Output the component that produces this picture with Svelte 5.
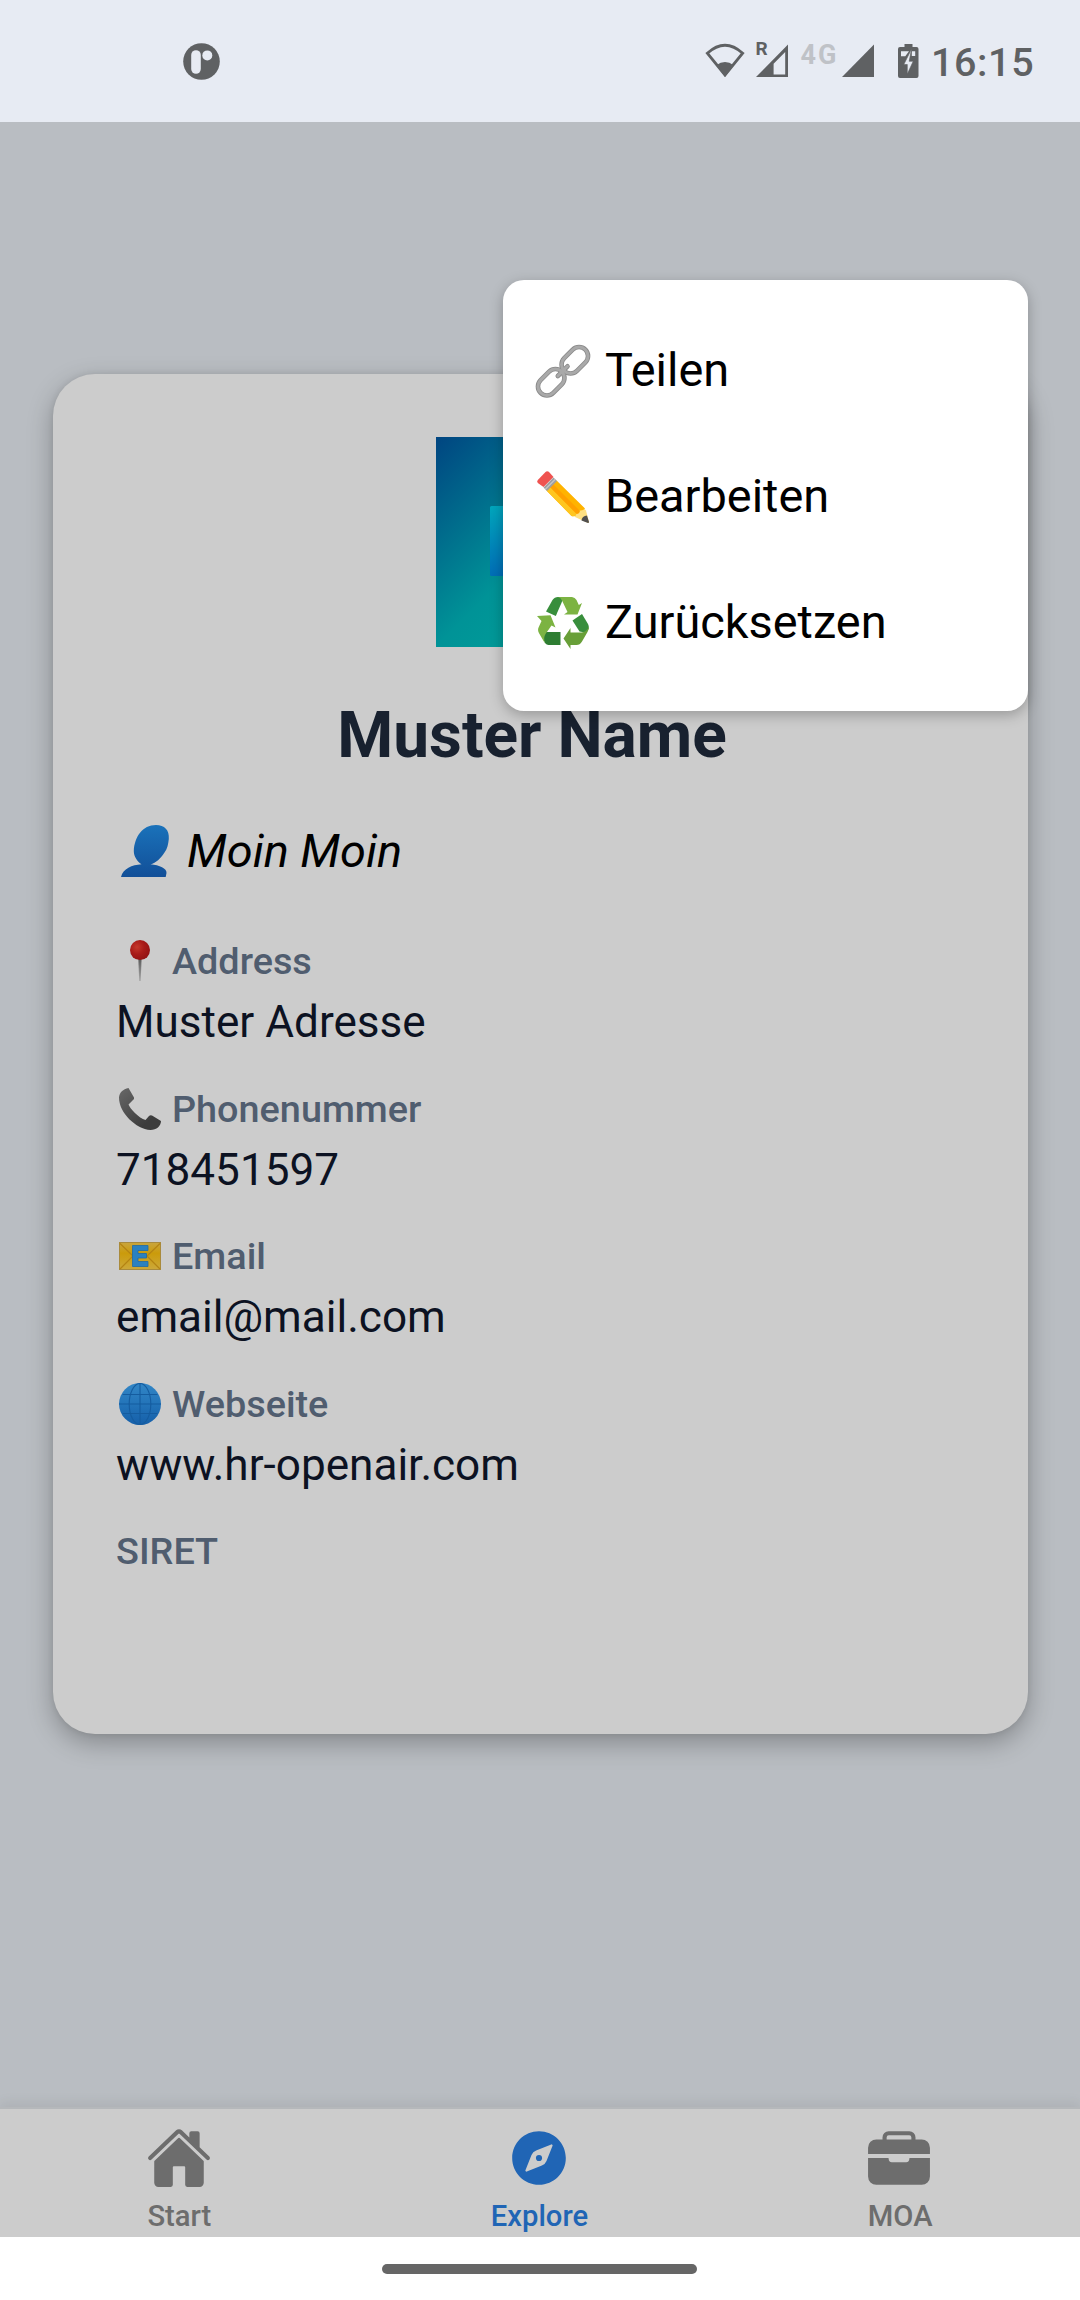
<script>
  const fields = [
    { icon: 'pin', label: 'Address', value: 'Muster Adresse' },
    { icon: 'phone', label: 'Phonenummer', value: '718451597' },
    { icon: 'mail', label: 'Email', value: 'email@mail.com' },
    { icon: 'globe', label: 'Webseite', value: 'www.hr-openair.com' },
    { icon: '', label: 'SIRET', value: '' },
  ];
  const actions = [
    { icon: 'link', label: 'Teilen' },
    { icon: 'pencil', label: 'Bearbeiten' },
    { icon: 'recycle', label: 'Zurücksetzen' },
  ];
  const tabs = [
    { icon: 'home', label: 'Start' },
    { icon: 'compass', label: 'Explore', active: true },
    { icon: 'briefcase', label: 'MOA' },
  ];
</script>

<div class="screen">
  <header class="status">
    <svg class="app-badge" viewBox="0 0 37 37">
      <circle cx="18.5" cy="18.5" r="18.3" fill="#5f6163" />
      <rect x="8.2" y="7.2" width="9.6" height="23.6" rx="4.8" fill="#e7ebf3" />
      <circle cx="24.3" cy="12.4" r="5" fill="#e7ebf3" />
    </svg>
    <svg class="indicators" viewBox="0 -20 220 64">
      <g fill="#5f6163">
        <path d="M4.300 13.2Q22 -2.800 39.700 13.2L22 35Z" fill="none" stroke="#5f6163" stroke-width="2.800" />
        <path d="M13.300 25.200Q22 19 30.700 25.200L22 36.800Z" />
        <path fill-rule="evenodd" d="M53 37L85 4.500V37ZM70.600 34.500H82.200V12L70.600 23.700Z" />
        <path d="M139 37L171 4.500V37Z" />
        <path d="M201.500 4h8v3h4a2 2 0 0 1 2 2V36a2 2 0 0 1-2 2H197a2 2 0 0 1-2-2V9a2 2 0 0 1 2-2h4.500Z" />
      </g>
      <path d="M198 11.300h8l-3.700 5H198ZM208.800 11.300h3.400v4.700h-3.400Z" fill="#e7ebf3" />
      <path d="M208.500 9L200.800 24.500h3.500V34L210.200 21.300h-4Z" fill="#e7ebf3" stroke="#5f6163" stroke-width=".6" />
      <text class="roam" x="52.500" y="15.300">R</text>
      <text class="net" x="97.500" y="23.500" textLength="36">4G</text>
    </svg>
    <span class="clock">16:15</span>
  </header>

  <main class="page">
    <section class="card">
      <svg class="logo" viewBox="0 0 210 210">
        <defs>
          <linearGradient id="logo-bg" x1="0" y1="0" x2="1" y2="1">
            <stop offset="0" stop-color="#004581" />
            <stop offset=".5" stop-color="#009397" />
            <stop offset="1" stop-color="#00a99b" />
          </linearGradient>
          <linearGradient id="logo-fg" x1="0" y1="0" x2=".3" y2="1">
            <stop offset="0" stop-color="#00a7bd" />
            <stop offset="1" stop-color="#0069b6" />
          </linearGradient>
        </defs>
        <rect width="210" height="210" fill="url(#logo-bg)" />
        <rect x="54" y="69" width="102" height="70" rx="1.500" fill="url(#logo-fg)" />
      </svg>
      <h1>Muster Name</h1>
      <p class="greeting">
        <svg class="person" viewBox="0 0 52 54">
          <defs>
            <linearGradient id="person-fill" x1="0" y1="0" x2="0" y2="1">
              <stop offset="0" stop-color="#1a72ba" />
              <stop offset="1" stop-color="#124f98" />
            </linearGradient>
          </defs>
          <path d="M1 53C3 44.500 12 41 21.500 40.300C17.500 37.500 13.800 33 13.800 27C14.500 13 22.500 1 36 1C44.500 1 49.500 6 48.800 15C48.200 20 47.500 24.500 44.500 28.500C40.500 34.500 36 39 30.500 40.300C39.500 41 47 44.500 46.500 49L45.700 53Z" fill="url(#person-fill)" />
        </svg>
        <em>Moin Moin</em>
      </p>

      <div class="fields">
        {#each fields as f}
          <div class="field">
            <div class="label">
              {#if f.icon === 'pin'}
                <svg class="glyph" viewBox="0 0 42 42">
                  <defs>
                    <radialGradient id="pin-head" cx=".35" cy=".35" r=".65">
                      <stop offset="0" stop-color="#c5382b" />
                      <stop offset=".55" stop-color="#a81b18" />
                      <stop offset="1" stop-color="#951313" />
                    </radialGradient>
                    <linearGradient id="pin-needle" x1="0" y1="0" x2="0" y2="1">
                      <stop offset="0" stop-color="#585858" />
                      <stop offset="1" stop-color="#aaa" />
                    </linearGradient>
                  </defs>
                  <path d="M19.300 18h3.300l-.9 23h-1.500Z" fill="url(#pin-needle)" />
                  <circle cx="21" cy="10.100" r="10" fill="url(#pin-head)" />
                </svg>
              {:else if f.icon === 'phone'}
                <svg class="glyph" viewBox="0 0 42 42">
                  <defs>
                    <linearGradient id="phone-fill" x1="0" y1="0" x2=".7" y2=".8">
                      <stop offset="0" stop-color="#686868" />
                      <stop offset="1" stop-color="#3c3c3c" />
                    </linearGradient>
                  </defs>
                  <path d="M0 9.500C.5 4.500 4 1 9.500 0L15 9.500Q15.500 11 14 12L9.500 16.500C10.500 20 20 30.500 26.500 32L30 28Q31.300 26.800 33 27.500L42 33C42 38 37.500 42 31.500 42C17 41 0 25 0 9.500Z" fill="url(#phone-fill)" />
                </svg>
              {:else if f.icon === 'mail'}
                <svg class="glyph" viewBox="0 0 42 42">
                  <defs>
                    <linearGradient id="mail-fill" x1="0" y1="0" x2="0" y2="1">
                      <stop offset="0" stop-color="#c9a53e" />
                      <stop offset=".4" stop-color="#cb9b0b" />
                      <stop offset="1" stop-color="#cca83a" />
                    </linearGradient>
                  </defs>
                  <rect x=".5" y="7.500" width="41" height="27" fill="url(#mail-fill)" stroke="#a98a3c" />
                  <path d="M1 8.500L14 21L1 34M41 8.500L28 21L41 34" fill="none" stroke="#b48313" stroke-width="1.200" />
                  <path d="M13.500 10.500H29V15.500H19V18.500H27.500V23H19V26.500H29V31.500H13.500Z" fill="#2b81c0" stroke="#1e6ba7" stroke-width=".8" />
                </svg>
              {:else if f.icon === 'globe'}
                <svg class="glyph" viewBox="0 0 42 42">
                  <defs>
                    <linearGradient id="globe-fill" x1="0" y1="0" x2="0" y2="1">
                      <stop offset="0" stop-color="#3286c6" />
                      <stop offset=".5" stop-color="#2374b9" />
                      <stop offset="1" stop-color="#155fa9" />
                    </linearGradient>
                  </defs>
                  <circle cx="21" cy="21" r="21" fill="url(#globe-fill)" />
                  <g fill="none" stroke="#155c9f" stroke-width="1.100">
                    <path d="M21 0V42M0 21H42M3.500 11.500H38.500M3.500 30.500H38.500" />
                    <ellipse cx="21" cy="21" rx="10.800" ry="20.500" />
                  </g>
                </svg>
              {/if}
              <span>{f.label}</span>
            </div>
            <div class="value">{f.value}</div>
          </div>
        {/each}
      </div>
    </section>
  </main>

  <nav class="tabs">
    {#each tabs as t}
      <div class="tab" class:active={t.active}>
        <svg class="tab-icon" viewBox="0 0 512 512" fill="currentColor">
          {#if t.icon === 'home'}
            <path d="M261.56 101.28a8 8 0 00-11.06 0L66.4 277.15a8 8 0 00-2.47 5.79L63.9 448a32 32 0 0032 32H192a16 16 0 0016-16V328a8 8 0 018-8h80a8 8 0 018 8v136a16 16 0 0016 16h96.06a32 32 0 0032-32V282.94a8 8 0 00-2.47-5.79z" />
            <path d="M490.91 244.15l-74.8-71.56V64a16 16 0 00-16-16h-48a16 16 0 00-16 16v32l-57.92-55.38C272.77 35.14 264.71 32 256 32c-8.68 0-16.72 3.14-22.14 8.63l-212.7 203.5c-6.22 6-7 15.87-1.34 22.37A16 16 0 0043 267.56L250.5 69.28a8 8 0 0111.06 0l207.52 198.28a16 16 0 0022.59-.44c6.14-6.36 5.63-16.86-.76-22.97z" />
          {:else if t.icon === 'compass'}
            <circle cx="256" cy="256" r="24" />
            <path d="M256 48C141.13 48 48 141.13 48 256s93.13 208 208 208 208-93.13 208-208S370.87 48 256 48zm105.07 113.33l-46.88 117.2a64 64 0 01-35.66 35.66l-117.2 46.88a8 8 0 01-10.4-10.4l46.88-117.2a64 64 0 0135.66-35.66l117.2-46.88a8 8 0 0110.4 10.4z" />
          {:else}
            <path d="M496 176a64.07 64.07 0 00-64-64h-48V96a48.05 48.05 0 00-48-48H176a48.05 48.05 0 00-48 48v16H80a64.07 64.07 0 00-64 64v48h480zm-144-64H160V96a16 16 0 0116-16h160a16 16 0 0116 16z" />
            <path d="M336 264a24 24 0 01-24 24H200a24 24 0 01-24-24v-4a4 4 0 00-4-4H16v144a64 64 0 0064 64h352a64 64 0 0064-64V256H340a4 4 0 00-4 4z" />
          {/if}
        </svg>
        <span>{t.label}</span>
      </div>
    {/each}
  </nav>

  <footer class="gesture"><div class="handle"></div></footer>

  <div class="menu">
    {#each actions as a}
      <div class="action">
        <svg class="action-icon" viewBox="0 0 52 52">
          {#if a.icon === 'link'}
            <g fill="none" stroke-linecap="round">
              <g stroke="#8a8a8a" stroke-width="4.600">
                <rect x="22.800" y="6.300" width="30" height="18" rx="9" transform="rotate(-45 37.800 15.300)" />
                <rect x="-.8" y="28.200" width="30" height="18" rx="9" transform="rotate(-45 14.200 37.200)" />
                <path d="M20.800 31L30.500 21.300" />
              </g>
              <g stroke="#a9a9a9" stroke-width="3">
                <rect x="22.800" y="6.300" width="30" height="18" rx="9" transform="rotate(-45 37.800 15.300)" />
                <rect x="-.8" y="28.200" width="30" height="18" rx="9" transform="rotate(-45 14.200 37.200)" />
                <path d="M20.800 31L30.500 21.300" />
              </g>
            </g>
          {:else if a.icon === 'pencil'}
            <path d="M9.500 19.500L19.500 9.500L49 39.500L52 51Q52 52 51 52L38 46Z" fill="#ffe082" />
            <path d="M9.500 19.500L19.500 9.500L48 37.500Q46 40 42.500 39.500Q43 43 39.500 42.800Q39 46 34.500 45Z" fill="#ffb300" />
            <path d="M9.500 19.500L13 16L39.500 42.800Q39 46 34.500 45Z" fill="#ffc61f" />
            <path d="M13 16L16 13L42.500 39.500Q43 43 39.500 42.800Z" fill="#ffa000" />
            <path d="M6.500 16.500L16.500 6.500L20 10L10 20Z" fill="#9e9e9e" />
            <path d="M8.300 18.300L18.300 8.300" stroke="#c4c4c4" stroke-width="1.400" />
            <path d="M.8 12Q-.5 10.500.8 9L8.500 1Q10 -.4 11.800.8L16.500 6L6.500 16Z" fill="#ef5350" />
            <path d="M44.500 49.500Q45 45 50 44.500L52 51Q52 52 51 52Z" fill="#504f4f" />
          {:else}
            <path d="M9 14.500L15.500 3Q17.500 0 21 0H27L18.800 19L9 14.500Z" fill="#388e3c" />
            <path d="M21 0H35Q38 .3 39.500 3L41.800 8L45 6L40.500 17.500L27 17.500L30.500 15L25 3.500Q24 .5 21 0Z" fill="#7cb342" />
            <path d="M35.500 23.500L45 17L51 27Q53 31 50 34L48 35.500L42.500 34.500Z" fill="#388e3c" />
            <path d="M52 29.500Q52.200 32 50.500 35L45 44.500Q43 48 39.500 48H33.500V52L26.500 41.500L33.500 31V35.500H44.500Q49.500 35 52 29.500Z" fill="#689f38" />
            <path d="M8.500 35H23.500V48H11.500Q7.500 47.500 6.500 42Q6 37 8.500 35Z" fill="#2e7d32" />
            <path d="M0 19L13.500 18.200L18.500 30.500L14.500 28.500L8.500 37Q6 41 8 46.500L2.200 36.500Q0 33 2 29.500L4.500 24Z" fill="#7cb342" />
          {/if}
        </svg>
        <span>{a.label}</span>
      </div>
    {/each}
  </div>
</div>

<style>
  :global(body) { margin: 0; background: #fff; }
  .screen {
    position: relative;
    display: flex;
    flex-direction: column;
    width: 1080px;
    height: 2300px;
    overflow: hidden;
    font-family: Roboto, "Liberation Sans", sans-serif;
  }
  svg { display: block; flex: none; }
  .status {
    display: flex;
    align-items: flex-start;
    box-sizing: border-box;
    height: 122px;
    padding: 20px 40px 0 183px;
    background: #e7ebf3;
    color: #5f6163;
  }
  .app-badge { width: 37px; height: 37px; margin-top: 22.500px; }
  .indicators { width: 220px; height: 64px; margin-left: 483px; }
  .roam { font-size: 19px; font-weight: 700; fill: #5f6163; }
  .net { font-size: 27px; font-weight: 700; fill: #bfc2c7; }
  .clock { margin: 20px 0 0 8px; font-size: 39.500px; font-weight: 500; line-height: 46px; letter-spacing: .6px; }
  .page { flex: 1; padding: 252px 52px 0 53px; background: #b9bdc2; }
  .card {
    display: flex;
    flex-direction: column;
    align-items: stretch;
    box-sizing: border-box;
    height: 1360px;
    padding: 63px;
    border-radius: 42px;
    background: #ccc;
    box-shadow: 0 9px 26px rgba(0, 0, 0, .28), 0 0 6px rgba(0, 0, 0, .08);
  }
  .logo { align-self: center; width: 210px; height: 210px; }
  h1 {
    margin: 52px 0 0;
    padding-right: 17px;
    text-align: center;
    font-size: 64px;
    font-weight: 700;
    line-height: 74px;
    color: #18212f;
  }
  .greeting {
    display: flex;
    align-items: center;
    margin: 50px 0 60px;
    height: 56px;
    font-size: 46.900px;
    line-height: 56px;
    color: #000;
  }
  .person { width: 52px; height: 54px; margin: 0 15px 0 4px; }
  .field { height: 147.600px; }
  .label {
    display: flex;
    align-items: center;
    height: 44px;
    margin-bottom: 14px;
    font-size: 37.800px;
    font-weight: 500;
    line-height: 44px;
    color: #505d6f;
  }
  .glyph { width: 42px; height: 42px; margin: 0 11px 0 3px; }
  .value { height: 50px; font-size: 44.100px; line-height: 50px; color: #0c1222; }
  .tabs {
    display: grid;
    grid-template-columns: repeat(3, 1fr);
    box-sizing: border-box;
    height: 130px;
    padding: 16px 1px 0 0;
    border-top: 2px solid #b5b8bb;
    background: #ccc;
    box-shadow: 0 -4px 12px rgba(0, 0, 0, .07);
    color: #6d6d6d;
  }
  .tab { display: flex; flex-direction: column; align-items: center; font-size: 29.200px; font-weight: 500; line-height: 34px; }
  .tab:first-child { padding-right: 1px; }
  .tab:last-child span { padding-left: 2px; }
  .tab-icon { width: 66px; height: 66px; margin-bottom: 8px; }
  .active { color: #2065b5; }
  .gesture { display: flex; justify-content: center; height: 63px; background: #fff; }
  .handle { width: 315px; height: 10px; margin: 27px 1px 0 0; border-radius: 5px; background: #666; }
  .menu {
    position: absolute;
    top: 280px;
    left: 503px;
    box-sizing: border-box;
    width: 525px;
    height: 431px;
    padding: 28px 34px 25px;
    border-radius: 21px;
    background: #fff;
    box-shadow: 0 4px 14px rgba(0, 0, 0, .26);
  }
  .action { display: flex; align-items: center; height: 126px; font-size: 46.900px; line-height: 54px; color: #000; }
  .action span { padding-bottom: 2px; }
  .action-icon { width: 52px; height: 52px; margin-right: 16px; overflow: visible; }
</style>
